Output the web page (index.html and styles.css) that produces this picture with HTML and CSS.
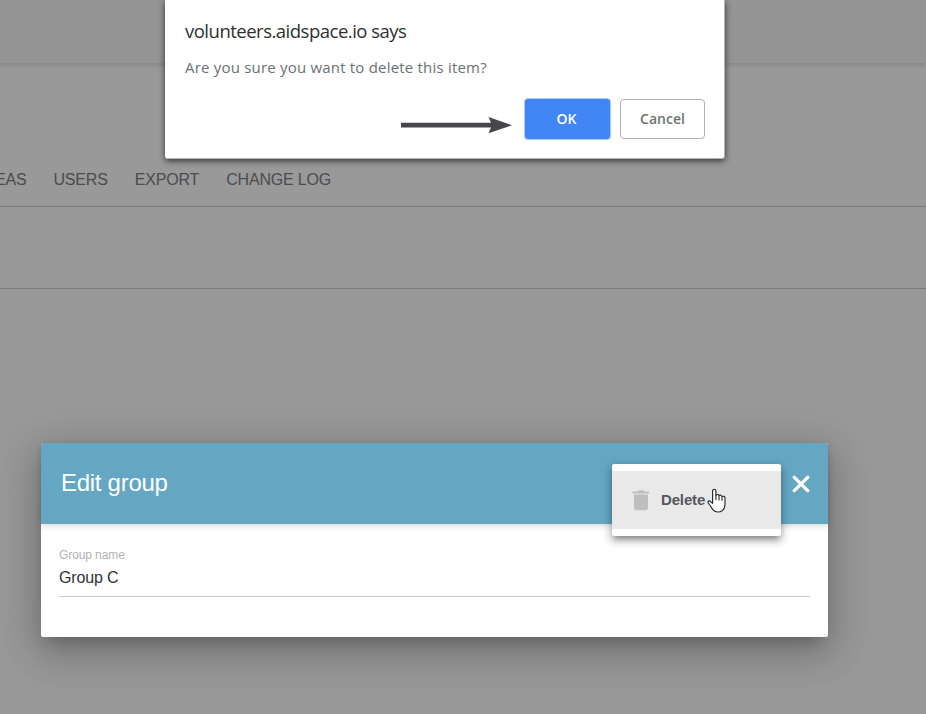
FILE: index.html
```html
<!DOCTYPE html>
<html lang="en">
<head>
<meta charset="utf-8">
<title>Edit group</title>
<link rel="stylesheet" href="styles.css">
</head>
<body>
<div class="page">
  <header class="topbar"></header>
  <nav class="tabs">
    <a>EAS</a><a>USERS</a><a>EXPORT</a><a>CHANGE LOG</a>
  </nav>
  <div class="subbar"></div>
  <main class="content">
    <section class="modal">
      <div class="modal-head">
        <h1>Edit group</h1>
        <svg class="close" width="18" height="18" viewBox="0 0 18 18"><path d="M2.3 2.3 15.7 15.7M15.7 2.3 2.3 15.7" stroke="#fff" stroke-width="3.3" stroke-linecap="round"/></svg>
        <div class="menu">
          <div class="menu-item">
            <svg class="trash" width="18" height="22" viewBox="0 0 18 22"><path d="M6 1.2h6v1.300h5.200v2H.6v-2H6zM2 5.400h14v13.200q0 2.600-2.400 2.600H4.400q-2.400 0-2.400-2.600z" fill="#bdbebe"/></svg>
            <span>Delete</span>
          </div>
          <svg class="pointer" width="20" height="26" viewBox="0 0 20 26"><path d="M5.600 2.600Q5.600 1.200 7.200 1.200T8.900 2.600V7.200Q10.900 5.700 12 7.500Q13.900 6.600 15 8.500Q17.900 7.500 18 10V16.500Q17.400 23.800 11.200 24Q6.800 24 4.500 19.500L1.300 15Q.2 12.800 2.600 12.900L5.600 15.400z" fill="#fff" stroke="#25282c" stroke-width="1.150" stroke-linejoin="round"/><path d="M8.900 7v5M12 7.500v5M15 8.500v4.200" fill="none" stroke="#25282c" stroke-width="1.100"/></svg>
        </div>
      </div>
      <div class="modal-body">
        <label>Group name</label>
        <div class="input">Group C</div>
      </div>
    </section>
  </main>
  <div class="alert">
    <div class="alert-title">volunteers.aidspace.io says</div>
    <div class="alert-text">Are you sure you want to delete this item?</div>
    <div class="alert-actions">
      <svg class="arrow" width="112" height="18" viewBox="0 0 112 18"><path d="M0 6.800H90L87.500 1 111 9.300 87.500 17.200 90 11.500H0z" fill="#46474c"/></svg>
      <div class="btn ok">OK</div>
      <div class="btn cancel">Cancel</div>
    </div>
  </div>
</div>
</body>
</html>
```
FILE: styles.css
```css
* { box-sizing: border-box; }
body { margin: 0; font-family: "Liberation Sans", Arial, sans-serif; }
.page { position: relative; width: 926px; height: 714px; overflow: hidden; background: #999; }
.topbar { height: 64px; background: #949494; border-bottom: 1px solid #8b8b8b; box-shadow: 0 1px 4px rgba(0,0,0,.14); }
.tabs { height: 143px; padding: 106px 0 0; border-bottom: 1px solid #7b7b7b; display: flex; gap: 27px; margin-left: -5px; font-size: 16px; line-height: 19px; letter-spacing: -.18px; color: #4b4c4e; white-space: nowrap; }
.subbar { height: 82px; border-bottom: 1px solid #7b7b7b; }
.content { padding: 154px 98px 0 41px; }
.modal { height: 194px; background: #fff; border-radius: 2px; box-shadow: 0 11px 15px -7px rgba(0,0,0,.2), 0 14px 38px 3px rgba(0,0,0,.14), 0 9px 46px 8px rgba(0,0,0,.12); }
.modal-head { position: relative; height: 81px; padding: 0 18px 0 20px; background: #65a7c2; border-radius: 2px 2px 0 0; box-shadow: 0 2px 6px rgba(0,0,0,.16); display: flex; align-items: center; justify-content: space-between; }
h1 { margin: 0 0 2px; font-size: 24px; font-weight: 400; line-height: 28px; letter-spacing: -.28px; color: #fff; }
.menu { position: absolute; left: 571px; top: 21px; width: 169px; height: 72px; padding: 7px 0; background: #fff; border-radius: 2px; box-shadow: 0 5px 5px -3px rgba(0,0,0,.25), 0 4px 9px 1px rgba(0,0,0,.32); }
.menu-item { height: 58px; padding-left: 20px; background: #e9e9e9; display: flex; align-items: center; gap: 11px; font-size: 15px; font-weight: 700; letter-spacing: -.15px; color: #54585e; }
.menu-item span { margin-bottom: 2px; }
.pointer { position: absolute; left: 95px; top: 24px; }
.modal-body { padding: 24px 18px 0; }
label { display: block; font-size: 12px; line-height: 14px; letter-spacing: -.1px; color: #b3b3b3; }
.input { height: 35px; padding-top: 6px; font-size: 16px; line-height: 19px; letter-spacing: -.15px; color: #303234; border-bottom: 1px solid #c8c8c8; }
.alert { position: absolute; left: 165px; top: 0; width: 560px; height: 159px; padding: 18px 20px 0; background: #fff; border: solid #b5b5b5; border-width: 0 1px 1px 0; border-radius: 0 0 3px 3px; box-shadow: 0 2px 6px rgba(0,0,0,.65); font-family: "Open Sans", "Noto Sans", sans-serif; }
.alert-title { font-size: 18.5px; line-height: 25px; letter-spacing: -.5px; color: #2d3033; white-space: nowrap; }
.alert-text { margin-top: 14px; font-size: 15px; line-height: 21px; letter-spacing: .2px; color: #6b7174; white-space: nowrap; }
.alert-actions { margin-top: 20px; display: flex; align-items: center; justify-content: flex-end; }
.arrow { margin: 12px 11px 0 0; }
.btn { height: 40px; padding-bottom: 2px; border-radius: 4px; display: flex; align-items: center; justify-content: center; font-size: 14px; font-weight: 600; }
.ok { width: 87px; height: 42px; padding-right: 2px; color: #fff; background: #4285f4; border: 1px solid #a9cdf8; margin-right: 9px; }
.cancel { width: 85px; margin-right: -1px; color: #6d7374; border: 1px solid #b2b2b2; }
```
